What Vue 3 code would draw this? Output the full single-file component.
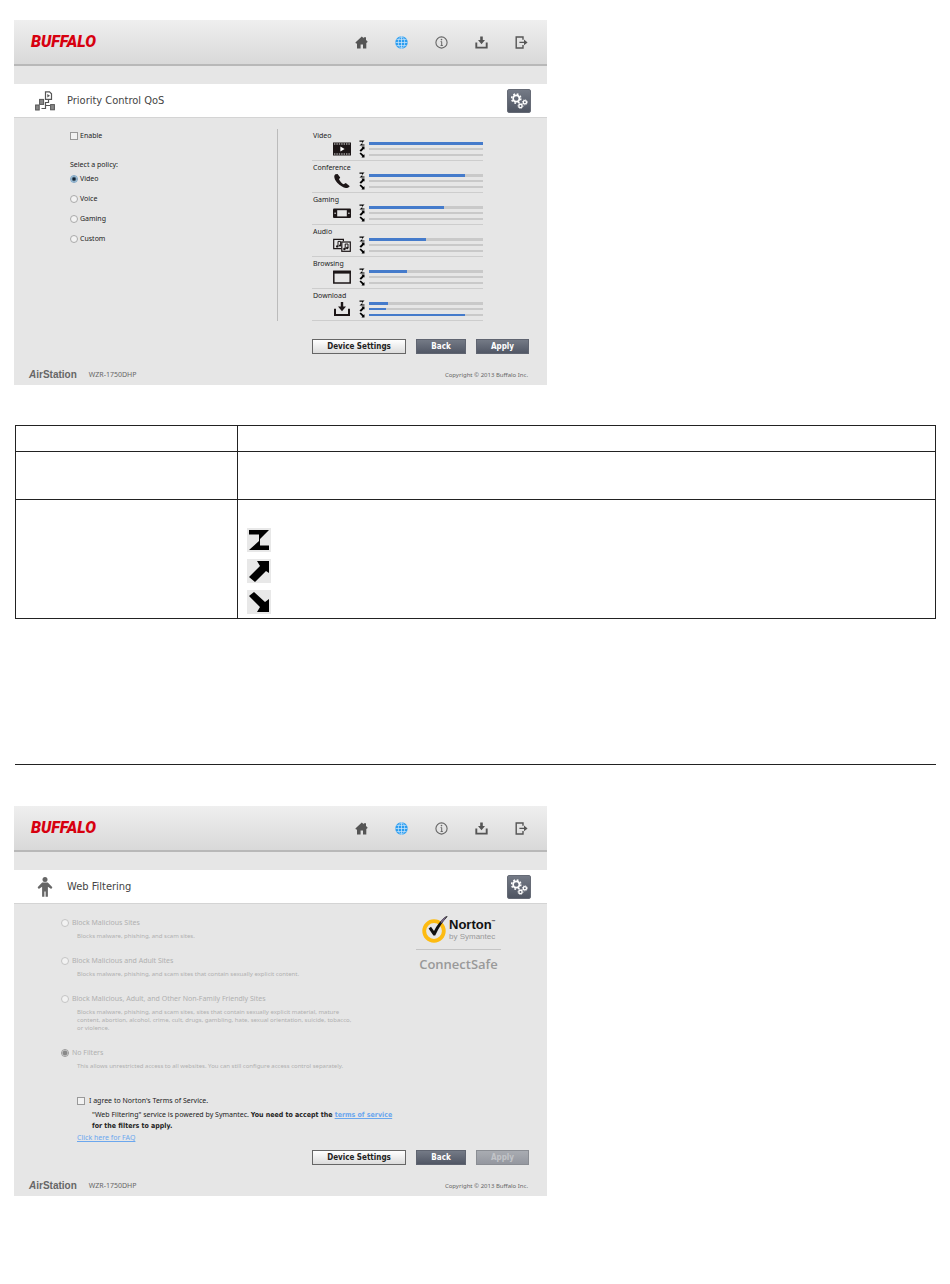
<template>
  <main class="page">
    <template v-for="panel in panels" :key="panel.id">
      <section class="panel">
        <header class="topbar">
          <a href="#" class="brand">BUFFALO</a>
          <nav class="nav">
            <a href="#" aria-label="Home">
              <svg viewBox="0 0 13 13"><path d="M6.8 0.6 L8.8 2.2 V1.2 H11 V4 L12.6 5.6 L12 6.8 H11.3 V12.4 H8 V8.4 H5.6 V12.4 H2 V7.6 H1 L0.4 6.4 Z" fill="#555" /></svg>
            </a>
            <a href="#" aria-label="Internet">
              <svg viewBox="0 0 13 13">
                <circle cx="6.5" cy="6.5" r="6.2" fill="#2a9df0" />
                <g fill="none" stroke="#d4eafa" stroke-width="0.7">
                  <ellipse cx="6.5" cy="6.5" rx="3.2" ry="5.8" />
                  <path d="M6.5 0.5 V12.5 M0.5 6.5 H12.5 M1.5 3.4 H11.5 M1.5 9.6 H11.5" />
                </g>
              </svg>
            </a>
            <a href="#" aria-label="Information">
              <svg viewBox="0 0 13 13">
                <circle cx="6.5" cy="6.5" r="5.6" fill="none" stroke="#666" stroke-width="1.1" />
                <path d="M5.6 5.6 H6.7 V9.4 M5.6 9.5 H7.8" fill="none" stroke="#666" stroke-width="1" />
                <circle cx="6.5" cy="3.6" r="0.8" fill="#666" />
              </svg>
            </a>
            <a href="#" aria-label="Download">
              <svg viewBox="0 0 13 13">
                <path d="M5.2 0.6 H7.8 V4 H10 L6.5 8.2 L3 4 H5.2 Z" fill="#555" />
                <path d="M1.3 6.6 V11.6 H11.7 V6.6" fill="none" stroke="#555" stroke-width="1.9" />
              </svg>
            </a>
            <a href="#" aria-label="Logout">
              <svg viewBox="0 0 13 13">
                <path d="M8 3.8 V1 H1.2 V12 H8 V9" fill="none" stroke="#555" stroke-width="1.4" />
                <path d="M4.4 5.7 H9 V3.6 L12.6 6.4 L9 9.2 V7.1 H4.4 Z" fill="#555" />
              </svg>
            </a>
          </nav>
        </header>

        <div class="titlebar">
          <svg v-if="panel.id === 'qos'" class="title-icon" viewBox="0 0 20 20">
            <g fill="none" stroke="#555" stroke-width="1.2">
              <path d="M10.5 0.8 H14.5 L16.5 2.8 V8.4 H10.5 Z" />
              <path d="M13.5 9 V11.5 H10.5 V17.5 H6.5 M10.5 14.5 H15" />
            </g>
            <path d="M12.3 3 L15 4.8 L12.3 6.6 Z" fill="#555" />
            <g fill="#888" stroke="#555" stroke-width="1">
              <rect x="4.6" y="8.4" width="4" height="5" />
              <rect x="0.6" y="14" width="3.6" height="5" />
              <rect x="15.6" y="13.6" width="3.8" height="5.2" />
            </g>
          </svg>
          <svg v-else class="title-icon" viewBox="0 0 20 20">
            <circle cx="10" cy="2.6" r="2.5" fill="#666" />
            <path d="M7.2 5.4 H12.8 L17.4 10.2 L16.2 12 L12.9 9.8 V19.8 H10.6 V14.4 H9.4 V19.8 H7.1 V9.8 L3.8 12 L2.6 10.2 Z" fill="#666" />
          </svg>
          <h1>{{ panel.title }}</h1>
          <button type="button" class="gear" aria-label="Advanced settings">
            <svg viewBox="0 0 24 24" fill="none" stroke="#fff">
              <circle cx="9" cy="9.3" r="3.4" stroke-width="1.8" />
              <circle cx="9" cy="9.3" r="5" stroke-width="1.7" stroke-dasharray="1.96 1.96" />
              <circle cx="18.4" cy="13.4" r="1.8" stroke-width="1.5" />
              <circle cx="18.4" cy="13.4" r="2.8" stroke-width="0.8" stroke-dasharray="1.2 1" />
              <circle cx="13.6" cy="17.4" r="1.8" stroke-width="1.5" />
              <circle cx="13.6" cy="17.4" r="2.8" stroke-width="0.8" stroke-dasharray="1.2 1" />
            </svg>
          </button>
        </div>

        <div v-if="panel.id === 'qos'" class="qos">
          <div class="policy">
            <label class="choice"><input type="checkbox" v-model="qosEnabled" /> Enable</label>
            <p id="policy-title" class="policy-title">Select a policy:</p>
            <div class="policy-list" role="radiogroup" aria-labelledby="policy-title">
              <label v-for="name in policies" :key="name" class="choice">
                <input type="radio" name="policy" :value="name" v-model="policy" /> {{ name }}
              </label>
            </div>
          </div>

          <div class="priorities">
            <div v-for="item in priorities" :key="item.name" class="priority">
              <span class="priority-name">{{ item.name }}</span>
              <svg class="priority-icon" viewBox="0 0 18 14">
                <template v-if="item.name === 'Video'">
                  <rect y="0.5" width="18" height="13" fill="#1c1617" />
                  <path d="M1 2 H17 M1 12 H17" stroke="#e6e6e6" stroke-width="1.2" stroke-dasharray="1.4 1" />
                  <path d="M7.4 4.4 L11.6 7 L7.4 9.6 Z" fill="#fff" />
                </template>
                <path v-else-if="item.name === 'Conference'" d="M2.4 0.2 C0.4 1.4 1 5 4.2 8.8 C7.8 12.6 12.4 14.8 15 13.8 L16.8 12.2 L12.8 9 L10.6 10.2 C8.8 9.4 7 7.4 6 5.2 L7.2 3.4 L4.6 0 Z" fill="#1c1617" />
                <template v-else-if="item.name === 'Gaming'">
                  <rect y="2.5" width="18" height="9.6" rx="1" fill="#1c1617" />
                  <rect x="4.2" y="4.2" width="9.6" height="6.2" fill="#e6e6e6" />
                  <circle cx="2.1" cy="7.3" r="0.8" fill="#e6e6e6" />
                  <circle cx="15.9" cy="7.3" r="0.8" fill="#e6e6e6" />
                </template>
                <template v-else-if="item.name === 'Audio'">
                  <path d="M8.4 10.6 H0.7 V1.4 H10.4 V3.2" fill="none" stroke="#1c1617" stroke-width="1.2" />
                  <rect x="8.8" y="4" width="8.5" height="9.3" fill="none" stroke="#1c1617" stroke-width="1.2" />
                  <path d="M5 8.4 V3.4 H7.6 V7.4 M12.2 11 V6 H15 V10" fill="none" stroke="#1c1617" stroke-width="1" />
                  <g fill="#1c1617">
                    <circle cx="4.2" cy="8.4" r="1.2" />
                    <circle cx="7" cy="7.6" r="1.1" />
                    <circle cx="11.4" cy="11" r="1.2" />
                    <circle cx="14.2" cy="10" r="1.2" />
                  </g>
                </template>
                <template v-else-if="item.name === 'Browsing'">
                  <rect x="0.8" y="1.4" width="16.4" height="11.6" fill="none" stroke="#1c1617" stroke-width="1.5" />
                  <rect x="0.2" y="0.8" width="17.6" height="2.8" fill="#1c1617" />
                </template>
                <template v-else>
                  <path d="M7.8 0 H10.2 V4.4 H13 L9 9.2 L5 4.4 H7.8 Z" fill="#1c1617" />
                  <path d="M2 6.8 V13 H16 V6.8" fill="none" stroke="#1c1617" stroke-width="2" />
                </template>
              </svg>
              <div class="meters">
                <div v-for="(level, i) in item.levels" :key="i" class="meter">
                  <svg class="meter-arrow" viewBox="0 0 24 24"><path :d="arrows[i]" /></svg>
                  <div class="track" :class="{ thin: i > 0 }">
                    <div class="fill" :style="{ width: level + '%' }"></div>
                  </div>
                </div>
              </div>
            </div>
          </div>
        </div>

        <div v-else class="filtering">
          <div class="filter-options">
            <div v-for="option in filters" :key="option.name" class="filter">
              <label class="choice">
                <input type="radio" name="filter" :value="option.name" v-model="filter" disabled /> {{ option.name }}
              </label>
              <p>{{ option.text }}</p>
            </div>
          </div>

          <div class="terms">
            <label class="choice"><input type="checkbox" v-model="agreed" /> I agree to Norton's Terms of Service.</label>
            <p>
              "Web Filtering" service is powered by Symantec.
              <b>You need to accept the <a href="#">terms of service</a><br />for the filters to apply.</b>
            </p>
            <a href="#" class="faq">Click here for FAQ</a>
          </div>

          <div class="norton">
            <div class="norton-top">
              <svg viewBox="0 0 26 28">
                <circle cx="12" cy="16" r="9.8" fill="#e6e6e6" stroke="#fdbb11" stroke-width="3.8" />
                <path d="M6.6 13.4 L9 11.8 L12 16 C14.6 10.6 18.4 5.4 22.4 2.4 C24 1.2 25.4 1 25.6 1.6 C20.6 6.8 16.8 13 13.2 20.6 H11.4 Z" fill="#111" />
                <path d="M19.2 5.4 L24.6 1 L22 5.6 L18.6 8.8 Z" fill="#776688" />
              </svg>
              <div>
                <strong>Norton<small>™</small></strong>
                <span>by Symantec</span>
              </div>
            </div>
            <div class="connectsafe">ConnectSafe</div>
          </div>
        </div>

        <div class="actions">
          <button type="button" class="btn light">Device Settings</button>
          <button type="button" class="btn back">Back</button>
          <button type="button" class="btn apply" :disabled="panel.id === 'filtering'">Apply</button>
        </div>

        <footer class="footer">
          <span class="airstation"><i>A</i>irStation</span>
          <span class="model">WZR-1750DHP</span>
          <span class="copyright">Copyright © 2013 Buffalo Inc.</span>
        </footer>
      </section>

      <template v-if="panel.id === 'qos'">
        <table class="params">
          <tbody>
            <tr class="row-head"><th></th><th></th></tr>
            <tr class="row-enable"><td></td><td></td></tr>
            <tr>
              <td></td>
              <td class="legend">
                <svg v-for="d in arrows" :key="d" viewBox="0 0 24 24">
                  <rect width="24" height="24" fill="#e8e8e8" />
                  <path :d="d" />
                </svg>
              </td>
            </tr>
          </tbody>
        </table>
        <hr />
      </template>
    </template>
  </main>
</template>

<script setup>
import { ref } from 'vue'

const panels = [
  { id: 'qos', title: 'Priority Control QoS' },
  { id: 'filtering', title: 'Web Filtering' },
]

const policies = ['Video', 'Voice', 'Gaming', 'Custom']
const policy = ref('Video')
const qosEnabled = ref(false)

// levels: priority, upload, download (percent)
const priorities = [
  { name: 'Video', levels: [100, 0, 0] },
  { name: 'Conference', levels: [84, 0, 0] },
  { name: 'Gaming', levels: [66, 0, 0] },
  { name: 'Audio', levels: [50, 0, 0] },
  { name: 'Browsing', levels: [33, 0, 0] },
  { name: 'Download', levels: [17, 15, 84] },
]

const arrows = [
  'M2 2 H22 L13 11 V17.5 H22 V22 H2 L12 13 V6.5 H2 Z',
  'M10 2 H22 V14 L19 12 L8 23 L2 18 L13 7 Z',
  'M2 6 L7 2 L18 12 L22 9 V22 H10 L13 17 Z',
]

const filter = ref('No Filters')
const agreed = ref(false)
const filters = [
  { name: 'Block Malicious Sites', text: 'Blocks malware, phishing, and scam sites.' },
  {
    name: 'Block Malicious and Adult Sites',
    text: 'Blocks malware, phishing, and scam sites that contain sexually explicit content.',
  },
  {
    name: 'Block Malicious, Adult, and Other Non-Family Friendly Sites',
    text:
      'Blocks malware, phishing, and scam sites, sites that contain sexually explicit material, mature\n' +
      'content, abortion, alcohol, crime, cult, drugs, gambling, hate, sexual orientation, suicide, tobacco,\n' +
      'or violence.',
  },
  {
    name: 'No Filters',
    text: 'This allows unrestricted access to all websites. You can still configure access control separately.',
  },
]
</script>

<style>
body {
  background: #fff;
}
</style>

<style scoped>
.page {
  padding: 20px 14px;
  font-family: "Noto Sans", sans-serif;
  font-size: 7px;
  line-height: 12px;
  color: #222;
}

* {
  box-sizing: border-box;
}

p,
h1 {
  margin: 0;
}

svg {
  display: block;
}

.panel {
  max-width: 533px;
  background: #e6e6e6;
}

.topbar {
  display: flex;
  align-items: center;
  justify-content: space-between;
  height: 46px;
  padding: 0 19px 0 17px;
  background: linear-gradient(#efefef, #d9d9d9);
  border-bottom: 2px solid #b8b8b8;
}

.brand {
  font-family: Roboto, "Liberation Sans", sans-serif;
  font-size: 16px;
  font-weight: 900;
  font-style: italic;
  color: #d7000f;
  text-decoration: none;
}

.nav {
  display: flex;
  gap: 27px;
}

.nav svg {
  width: 13px;
  height: 13px;
}

.titlebar {
  display: flex;
  align-items: center;
  height: 34px;
  margin-top: 18px;
  padding: 0 16px 0 21px;
  background: #fff;
  border-bottom: 1px solid #d4d4d4;
}

.title-icon {
  width: 20px;
  height: 20px;
}

h1 {
  flex: 1;
  padding-left: 12px;
  font-family: "DejaVu Sans Condensed", "DejaVu Sans", sans-serif;
  font-size: 11px;
  font-weight: normal;
  color: #444;
}

.gear {
  width: 24px;
  height: 24px;
  padding: 0;
  border: 1px solid #666b76;
  border-radius: 2px;
  background: linear-gradient(#747a86, #4f5562);
}

.choice {
  display: flex;
  align-items: center;
  gap: 2px;
}

input {
  appearance: none;
  width: 8px;
  height: 8px;
  margin: 0;
  border: 1px solid #999;
  background: #f2f2f2;
}

input[type="radio"] {
  border-radius: 50%;
  border-color: #aaa;
}

input[type="radio"]:checked {
  border-color: #7fa5c4;
  background: radial-gradient(circle, #123 0 1px, #b9dcf2 3px);
}

input[type="radio"]:disabled {
  border-color: #c4c4c4;
}

input[type="radio"]:disabled:checked {
  border-color: #999;
  background: radial-gradient(circle, #888 0 2px, #e6e6e6 3px);
}

.qos {
  display: flex;
  padding-top: 11px;
}

.policy {
  flex: 1;
  padding: 1px 0 0 56px;
  border-right: 1px solid #bbb;
}

.policy-title {
  margin: 17px 0 2px;
}

.policy-list {
  display: grid;
  gap: 8px;
}

.priorities {
  width: 269px;
  padding: 0 64px 0 34px;
}

.priority {
  display: grid;
  grid-template-columns: 18px 1fr;
  align-items: center;
  column-gap: 8px;
  padding: 2px 0 2px 21px;
  border-bottom: 1px solid #cdcdcd;
}

.priority-name {
  grid-column: 1 / -1;
  margin-left: -20px;
  line-height: 9px;
}

.priority-icon {
  width: 18px;
  height: 14px;
}

.meter {
  display: flex;
  align-items: center;
  gap: 4px;
  height: 6px;
}

.meter-arrow {
  width: 6px;
  height: 6px;
}

.track {
  flex: 1;
  height: 3px;
  background: #c9c9c9;
}

.track.thin {
  height: 2px;
}

.fill {
  height: 100%;
  background: #457bcb;
}

.filtering {
  position: relative;
  padding: 13px 0 0 47px;
}

.filter-options {
  display: grid;
  gap: 15px;
  color: #b0b0b0;
}

.filter p {
  margin: 3px 0 0;
  padding-left: 16px;
  font-size: 6px;
  line-height: 8px;
  white-space: pre-line;
}

.filter .choice {
  gap: 3px;
}

.terms {
  padding: 25px 0 0 16px;
  line-height: 11px;
}

.terms .choice {
  gap: 4px;
  line-height: 12px;
}

.terms p {
  margin: 2px 0 1px;
  padding-left: 15px;
}

.terms b {
  font-family: "DejaVu Sans Condensed", "DejaVu Sans", sans-serif;
  line-height: 8px;
}

.terms a {
  color: #6ba7ee;
}

.faq {
  display: block;
}

.norton {
  position: absolute;
  top: 11px;
  right: 46px;
  width: 85px;
}

.norton-top {
  display: flex;
  gap: 1px;
  padding: 0 0 6px 6px;
  border-bottom: 1px solid #c4c4c4;
}

.norton-top svg {
  flex: none;
  width: 26px;
  height: 28px;
}

.norton strong {
  display: flex;
  margin-top: 3px;
  font-family: "Liberation Sans", sans-serif;
  font-size: 13px;
  line-height: 14px;
  color: #111;
}

.norton small {
  font-size: 4px;
  line-height: 8px;
}

.norton span {
  display: block;
  font-family: "Liberation Sans", sans-serif;
  font-size: 8px;
  line-height: 9px;
  white-space: nowrap;
  color: #999;
}

.connectsafe {
  font-family: "Open Sans", sans-serif;
  font-size: 13px;
  font-weight: 600;
  line-height: 28px;
  text-align: center;
  color: #999;
}

.actions {
  display: flex;
  justify-content: flex-end;
  padding: 18px 18px 0 0;
}

.filtering + .actions {
  padding-top: 7px;
}

.btn {
  height: 15px;
  padding: 0;
  border: 1px solid #5f6470;
  background: linear-gradient(#747a86, #515765);
  font-family: "DejaVu Sans Condensed", "DejaVu Sans", sans-serif;
  font-size: 8px;
  font-weight: bold;
  line-height: 12px;
  color: #fff;
}

.light {
  width: 94px;
  border-color: #666;
  background: linear-gradient(#fff, #dcdcdc);
  color: #222;
}

.back {
  width: 50px;
  margin: 0 10px;
}

.apply {
  width: 53px;
}

.btn:disabled {
  border-color: #8a8d93;
  background: linear-gradient(#a9acb2, #94979f);
  color: #c2c4c8;
}

.footer {
  display: flex;
  align-items: center;
  height: 31px;
  padding: 10px 19px 0 15px;
  color: #666;
}

.airstation {
  font-family: "Liberation Sans", sans-serif;
  font-size: 10px;
  font-weight: bold;
}

.model {
  margin-left: 12px;
}

.copyright {
  margin-left: auto;
  font-size: 6px;
}

.params {
  width: calc(100% - 1px);
  margin: 40px 0 0 1px;
  border-collapse: collapse;
}

.params th,
.params td {
  padding: 0;
  border: 1px solid #222;
}

.params th:first-child {
  width: 222px;
}

.row-head {
  height: 26px;
}

.row-enable {
  height: 48px;
}

.params .legend {
  padding: 28px 9px 4px;
}

.legend svg {
  width: 24px;
  height: 24px;
}

.legend svg + svg {
  margin-top: 7px;
}

hr {
  height: 1px;
  margin: 145px 0 41px 1px;
  border: 0;
  background: #222;
}
</style>
